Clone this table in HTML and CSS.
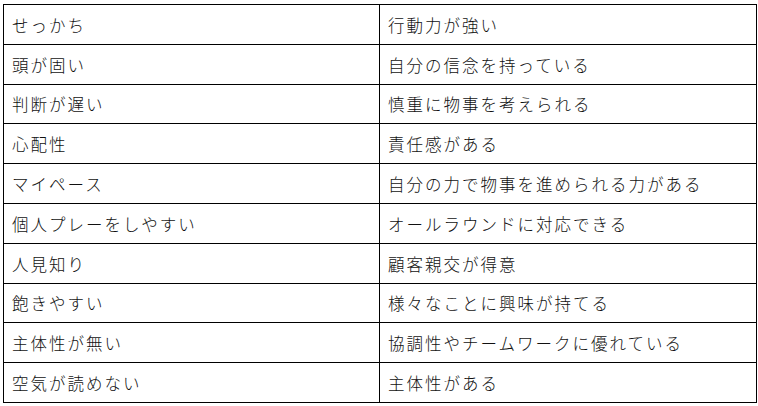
FILE: index.html
```html
<!DOCTYPE html>
<html lang="ja">
<head>
<meta charset="utf-8">
<link rel="stylesheet" href="styles.css">
</head>
<body>
<table class="traits">
  <colgroup><col class="col-a"><col class="col-b"></colgroup>
  <tbody>
    <tr><td>せっかち</td><td>行動力が強い</td></tr>
    <tr><td>頭が固い</td><td>自分の信念を持っている</td></tr>
    <tr><td>判断が遅い</td><td>慎重に物事を考えられる</td></tr>
    <tr><td>心配性</td><td>責任感がある</td></tr>
    <tr><td>マイペース</td><td>自分の力で物事を進められる力がある</td></tr>
    <tr><td>個人プレーをしやすい</td><td>オールラウンドに対応できる</td></tr>
    <tr><td>人見知り</td><td>顧客親交が得意</td></tr>
    <tr><td>飽きやすい</td><td>様々なことに興味が持てる</td></tr>
    <tr><td>主体性が無い</td><td>協調性やチームワークに優れている</td></tr>
    <tr><td>空気が読めない</td><td>主体性がある</td></tr>
  </tbody>
</table>
</body>
</html>
```
FILE: styles.css
```css
html, body {
  margin: 0;
  padding: 0;
  background: #ffffff;
}
body {
  padding: 4px 0 0 3px;
}
.traits {
  border-collapse: collapse;
  width: 753px;
  height: 399px;
  table-layout: fixed;
  font-family: "Noto Sans CJK JP", "Noto Sans", sans-serif;
  font-size: 16.5px;
  font-weight: 300;
  letter-spacing: 2px;
  color: #111111;
}
.col-a { width: 376px; }
.col-b { width: 377px; }
.traits td {
  border: 1px solid #000000;
  padding: 1px 0 0 8px;
  vertical-align: middle;
  white-space: nowrap;
  line-height: 20px;
}
```
